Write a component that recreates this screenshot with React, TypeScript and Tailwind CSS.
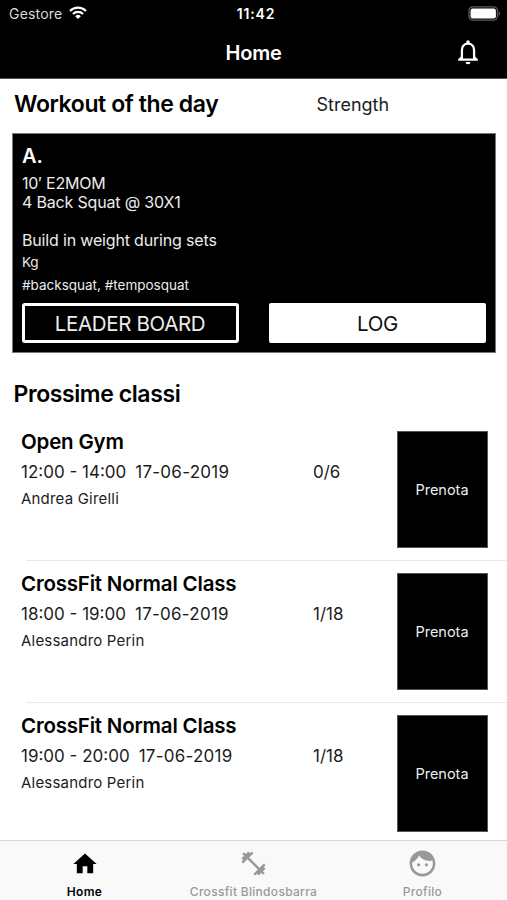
import type { ReactNode } from "react";
import { MdHome } from "react-icons/md";

interface GymClass {
  name: string;
  time: string;
  date: string;
  coach: string;
  booked: string;
}

const CLASSES: GymClass[] = [
  { name: "Open Gym", time: "12:00 - 14:00", date: "17-06-2019", coach: "Andrea Girelli", booked: "0/6" },
  { name: "CrossFit Normal Class", time: "18:00 - 19:00", date: "17-06-2019", coach: "Alessandro Perin", booked: "1/18" },
  { name: "CrossFit Normal Class", time: "19:00 - 20:00", date: "17-06-2019", coach: "Alessandro Perin", booked: "1/18" },
];

function WifiIcon() {
  return (
    <svg width="18" height="14" viewBox="0 0 18 14" fill="none" stroke="currentColor" strokeWidth="2.1">
      <path d="M1 4.9a11.4 11.4 0 0 1 16 0" />
      <path d="M3.9 8a7.3 7.3 0 0 1 10.2 0" />
      <path d="M9 13 6.2 10.2a4 4 0 0 1 5.6 0z" fill="currentColor" stroke="none" />
    </svg>
  );
}

function BatteryIcon() {
  return (
    <svg width="33" height="15" viewBox="0 0 33 15" fill="none">
      <rect x="0.9" y="0.9" width="28.6" height="13.2" rx="4" stroke="#5c5c5c" strokeWidth="1.3" />
      <rect x="2.5" y="2.5" width="25.4" height="10" rx="2.2" fill="white" />
      <path d="M30.8 5.4c1.4.5 1.4 3.7 0 4.2z" fill="#777" />
    </svg>
  );
}

function BellIcon() {
  return (
    <svg className="mr-[29px] justify-self-end" width="20" height="25" viewBox="0 0 20 25" fill="none">
      <path d="M3.9 19V10.4C3.9 6.6 6.3 3.7 10 3.7s6.1 2.9 6.1 6.7V19" stroke="currentColor" strokeWidth="2.3" />
      <path d="M8.3 4V1.9a1.7 1.7 0 0 1 3.4 0V4z" fill="currentColor" />
      <path d="M3 16.6 0.2 19.3V20.7H19.8V19.3L17 16.6V18.4H3z" fill="currentColor" />
      <path d="M7.5 22h5a2.5 2.3 0 0 1-5 0z" fill="currentColor" />
    </svg>
  );
}

function DumbbellIcon() {
  return (
    <svg width="29" height="29" viewBox="0 0 24 24" fill="currentColor">
      <path d="M20.57 14.86L22 13.43 20.57 12 17 15.57 8.43 7 12 3.43 10.57 2 9.14 3.43 7.71 2 5.57 4.14 4.14 2.71 2.71 4.14l1.43 1.43L2 7.71l1.43 1.43L2 10.57 3.43 12 7 8.43 15.57 17 12 20.57 13.43 22l1.43-1.43L16.29 22l2.14-2.14 1.43 1.43 1.43-1.43-1.43-1.43L22 16.29z" />
    </svg>
  );
}

function FaceIcon() {
  return (
    <svg width="31" height="31" viewBox="0 0 24 24" fill="currentColor">
      <path d="M9 11.75a1.25 1.25 0 1 0 0 2.5 1.25 1.25 0 0 0 0-2.5zm6 0a1.25 1.25 0 1 0 0 2.5 1.25 1.25 0 0 0 0-2.5zM12 2C6.48 2 2 6.48 2 12s4.48 10 10 10 10-4.48 10-10S17.52 2 12 2zm0 18c-4.41 0-8-3.59-8-8 0-.29.02-.58.05-.86 2.36-1.05 4.23-2.98 5.21-5.37C11.07 8.33 14.05 10 17.42 10c.78 0 1.53-.09 2.25-.26.21.71.33 1.47.33 2.26 0 4.41-3.59 8-8 8z" />
    </svg>
  );
}

function StatusBar() {
  return (
    <div className="grid h-7 grid-cols-3 items-center pl-[9px] pr-1.5 text-[14px] leading-7">
      <div className="flex items-center gap-[7px] text-[#d8d8d8]">
        <span className="tracking-[0.2px]">Gestore</span>
        <span className="-mt-0.5 text-white"><WifiIcon /></span>
      </div>
      <span className="pl-0.5 text-center font-semibold tracking-[0.8px]">11:42</span>
      <div className="-mt-0.5 flex justify-end"><BatteryIcon /></div>
    </div>
  );
}

function WorkoutCard() {
  return (
    <section className="ml-3 mr-[11px] mt-[5px] h-[220px] border border-[#777] bg-black px-[9px] text-[#ececec]">
      <h3 className="pt-2 text-[20px] font-semibold leading-7 text-white">A.</h3>
      <p className="mt-1 whitespace-pre-line text-[16px] leading-[19px] tracking-[-0.17px]">
        {"10′ E2MOM\n4 Back Squat @ 30X1\n\nBuild in weight during sets"}
      </p>
      <p className="mt-0.5 text-[13.5px] leading-5 tracking-[-0.2px]">Kg</p>
      <p className="mt-[3px] text-[13.5px] leading-5">#backsquat, #temposquat</p>
      <div className="mt-2 flex justify-between">
        <button className="h-10 w-[217px] rounded-[3px] border-3 border-white pr-px pt-0.5 text-[20.5px] tracking-[-0.35px]">
          LEADER BOARD
        </button>
        <button className="h-10 w-[217px] rounded-[2px] bg-white pt-0.5 text-[20.5px] tracking-[-0.3px] text-[#111]">
          LOG
        </button>
      </div>
    </section>
  );
}

function ClassRow({ item, last }: { item: GymClass; last: boolean }) {
  return (
    <li>
      <div className="flex h-[141px] pl-[21px] pr-[19px] pt-3">
        <div className="w-[292px]">
          <h3 className="-mt-px text-[20.5px] font-semibold leading-6 tracking-[-0.2px] text-black">{item.name}</h3>
          <p className="mt-2 flex gap-[9px] text-[17px] leading-5">
            <span>{item.time}</span>
            <span className="tracking-[0.25px]">{item.date}</span>
          </p>
          <p className="mt-[7px] text-[15px] leading-5 tracking-[0.2px]">{item.coach}</p>
        </div>
        <p className="mt-[31px] text-[17px] leading-5">{item.booked}</p>
        <button className="ml-auto h-[117px] w-[91px] border border-[#555] bg-black pt-px text-[14.5px] text-[#ececec]">
          <span className="mr-px">Prenota</span>
        </button>
      </div>
      {!last && <div className="ml-[26px] h-px bg-[#e9e9e9]" />}
    </li>
  );
}

function Tab({ label, active = false, children }: { label: string; active?: boolean; children: ReactNode }) {
  return (
    <button className={active ? "flex flex-col items-center font-semibold text-black" : "flex flex-col items-center font-medium text-[#999]"}>
      <span className="flex h-[43px] items-center pt-[2px]">{children}</span>
      <span className="text-[12px] leading-4 tracking-[0.3px]">{label}</span>
    </button>
  );
}

export default function App() {
  return (
    <div className="flex h-[900px] w-[507px] flex-col overflow-hidden bg-white font-['Inter',sans-serif] text-[#1c1c1c]">
      <header className="h-[79px] shrink-0 border-b border-[#555] bg-black text-white">
        <StatusBar />
        <div className="grid h-[49px] grid-cols-3 items-center">
          <h1 className="col-start-2 text-center text-[20px] font-semibold tracking-[-0.2px]">Home</h1>
          <BellIcon />
        </div>
      </header>

      <main className="min-h-0 flex-1 overflow-hidden">
        <div className="flex h-[49px] items-center pl-[14px] pt-px">
          <h2 className="w-[302.5px] text-[23px] font-semibold tracking-[-0.4px] text-black">Workout of the day</h2>
          <span className="text-[18px]">Strength</span>
        </div>
        <WorkoutCard />
        <h2 className="mt-[25px] pl-[13.5px] text-[23px] font-semibold leading-8 tracking-[-0.4px] text-black">
          Prossime classi
        </h2>
        <ul className="mt-[9px]">
          {CLASSES.map((item, i) => (
            <ClassRow key={i} item={item} last={i === CLASSES.length - 1} />
          ))}
        </ul>
      </main>

      <nav className="grid h-[60px] shrink-0 grid-cols-3 border-t border-[#d8d8d8] bg-[#f9f9f9]">
        <Tab label="Home" active><MdHome size={28} /></Tab>
        <Tab label="Crossfit Blindosbarra"><DumbbellIcon /></Tab>
        <Tab label="Profilo"><FaceIcon /></Tab>
      </nav>
    </div>
  );
}
